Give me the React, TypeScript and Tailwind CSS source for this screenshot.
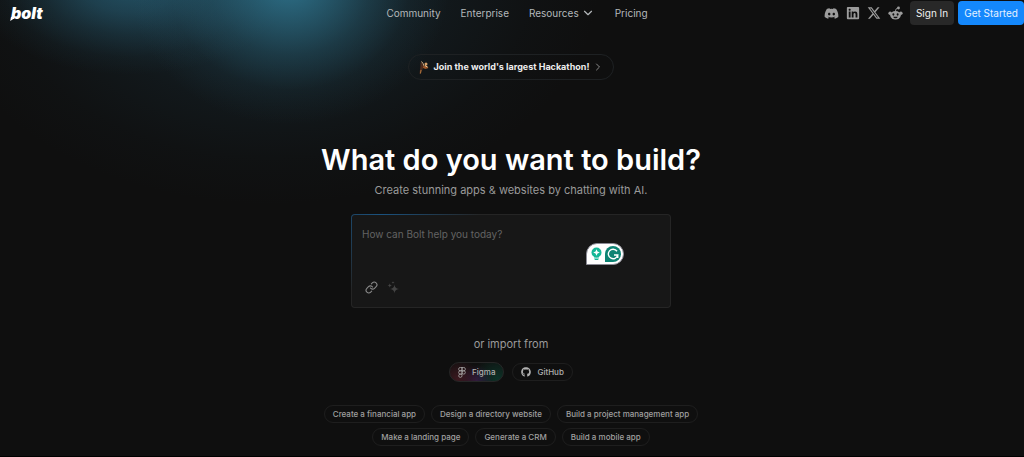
import { ChevronDown, ChevronRight, Link } from "lucide-react";
import { FaDiscord, FaGithub, FaLinkedin } from "react-icons/fa";
import { FaXTwitter } from "react-icons/fa6";

const navLinks = ["Community", "Enterprise", "Resources", "Pricing"];

const socials = [
  { label: "Discord", icon: <FaDiscord size={15} /> },
  { label: "LinkedIn", icon: <FaLinkedin size={14} /> },
  { label: "X", icon: <FaXTwitter size={14} /> },
  { label: "Reddit", icon: <RedditIcon /> },
];

const suggestions = [
  "Create a financial app",
  "Design a directory website",
  "Build a project management app",
  "Make a landing page",
  "Generate a CRM",
  "Build a mobile app",
];

function RedditIcon() {
  return (
    <svg width="15" height="15" viewBox="0 0 30 30" fill="none">
      <ellipse cx="15" cy="18.5" rx="10.5" ry="8.5" fill="currentColor" />
      <circle cx="4.2" cy="14.5" r="3.4" fill="currentColor" />
      <circle cx="25.8" cy="14.5" r="3.4" fill="currentColor" />
      <circle cx="21" cy="4" r="2.8" fill="currentColor" />
      <path d="M15 11c0-4 1.5-6.5 5-7" stroke="currentColor" strokeWidth="2" />
      <ellipse cx="10.8" cy="17" rx="2" ry="2.3" fill="#111" />
      <ellipse cx="19.2" cy="17" rx="2" ry="2.3" fill="#111" />
      <path d="M10.5 21.5h9c-.7 2-2.5 3-4.5 3s-3.8-1-4.5-3z" fill="#111" />
    </svg>
  );
}

function BoltLogo() {
  return (
    <svg width="36" height="20" viewBox="0 0 36 20" fill="#fff">
      <text
        x="1"
        y="16"
        fontFamily="Inter, sans-serif"
        fontSize="16"
        fontWeight="900"
        fontStyle="italic"
      >
        bolt
      </text>
      <path d="M1 14h3l-1.500 2.400L.2 18z" />
    </svg>
  );
}

function RunnerIcon() {
  return (
    <svg width="11" height="13" viewBox="0 0 22 26" fill="none">
      <path d="M3 3l3 1 3 8-2 5-4 8-2 1 1-9 1-6z" fill="#4d2c1e" />
      <path d="M5 1l3 4 2 5" stroke="#d9b48a" strokeWidth="2" />
      <circle cx="14" cy="6" r="3" fill="#d9a066" />
      <path d="M9 9l7 1 3 4-6 2-5-2z" fill="#9c5527" />
      <path d="M12 9l5 3" stroke="#f1d7a8" strokeWidth="2" />
      <path d="M4 18l-1 7" stroke="#b5793f" strokeWidth="2" />
    </svg>
  );
}

function SparklesIcon() {
  return (
    <svg width="13" height="13" viewBox="0 0 26 26" fill="currentColor">
      <path d="M15 7c.8 5.500 2.500 7.700 9 9-6.500 1.300-8.200 3.500-9 9-.8-5.500-2.500-7.700-9-9 6.500-1.300 8.200-3.500 9-9z" />
      <path d="M5.500 4.500c.5 2.800 1.500 4 4.500 4.500-3 .5-4 1.700-4.500 4.500C5 10.700 4 9.500 1 9c3-.5 4-1.700 4.500-4.500z" />
      <path d="M12 0c.3 2 1 2.700 3 3-2 .3-2.700 1-3 3-.3-2-1-2.700-3-3 2-.3 2.700-1 3-3z" />
    </svg>
  );
}

function FigmaIcon() {
  return (
    <svg
      width="8"
      height="11"
      viewBox="0 0 16 22"
      fill="none"
      stroke="currentColor"
      strokeWidth="1.5"
    >
      <path d="M8 1H4.500a3.300 3.300 0 0 0 0 6.600H8zM8 1h3.500a3.300 3.300 0 0 1 0 6.600H8zM8 7.600H4.500a3.300 3.300 0 0 0 0 6.600H8zM8 14.200H4.500A3.300 3.300 0 1 0 8 17.600z" />
      <circle cx="11.4" cy="10.9" r="3.3" />
    </svg>
  );
}

function GrammarlyBadge() {
  return (
    <div className="absolute right-[47px] top-[29px] flex h-[22px] w-[38px] items-center gap-[3px] rounded-[11px] rounded-bl-none border border-[#8b8b95] bg-white pl-[4px]">
      <svg width="11" height="14" viewBox="0 0 22 28">
        <circle cx="11" cy="11" r="10" fill="#15b797" />
        <path d="M6 17h10v4H6zM6 23h10l-2 3H8z" fill="#15b797" />
        <path d="M11 4.500l2 4.500 4.500 2-4.500 2-2 4.500L9 13l-4.500-2L9 9z" fill="#fff" />
      </svg>
      <svg width="16" height="16" viewBox="0 0 32 32">
        <path d="M16 0a16 16 0 1 1 0 32H0V16A16 16 0 0 1 16 0z" fill="#0d8373" />
        <path
          d="M24 10.500A9.500 9.500 0 1 0 25.500 18H18M25.500 17v7"
          fill="none"
          stroke="#fff"
          strokeWidth="2.8"
        />
      </svg>
    </div>
  );
}

function Header() {
  return (
    <header className="grid grid-cols-[1fr_auto_1fr] items-center pl-[10px] pt-px">
      <a href="#" aria-label="bolt" className="justify-self-start">
        <BoltLogo />
      </a>
      <nav className="flex items-center gap-5 text-[10px] text-[#b4b8bb]">
        {navLinks.map((link) => (
          <a key={link} href="#" className="flex items-center gap-[2px]">
            {link}
            {link === "Resources" && <ChevronDown size={14} strokeWidth={2} />}
          </a>
        ))}
      </nav>
      <div className="flex items-center justify-end gap-1">
        <div className="mr-[3px] flex items-center gap-[7px] text-[#9c9c9c]">
          {socials.map((social) => (
            <a key={social.label} href="#" aria-label={social.label}>
              {social.icon}
            </a>
          ))}
        </div>
        <button className="h-6 rounded-[4px] bg-[#282828] px-[6px] text-[10px] text-[#f0f0f0]">
          Sign In
        </button>
        <button className="h-6 rounded-[4px] bg-[#1488fc] px-[6px] text-[10px] text-[#e4f1ff]">
          Get Started
        </button>
      </div>
    </header>
  );
}

function PromptBox() {
  return (
    <div className="relative mt-4 w-[320px] max-w-full rounded-[4px] bg-[radial-gradient(ellipse_100px_80px_at_30px_0px,#1a527f,#252525)] p-px">
      <div className="flex flex-col rounded-[3px] bg-[#171717] px-[10px] pb-[13px] pt-[11px]">
        <textarea
          aria-label="Prompt"
          placeholder="How can Bolt help you today?"
          className="h-[55px] w-full resize-none bg-transparent text-[10px] leading-4 outline-none placeholder:text-[#636363]"
        />
        <div className="flex items-center gap-[9px] px-[3px]">
          <button aria-label="Attach link" className="text-[#8a8a8a]">
            <Link size={13} strokeWidth={2} />
          </button>
          <button aria-label="Enhance prompt" className="text-[#444]">
            <SparklesIcon />
          </button>
        </div>
      </div>
      <GrammarlyBadge />
    </div>
  );
}

export default function App() {
  return (
    <div className="min-h-screen border-b border-black bg-[#0f0f0f] bg-[radial-gradient(ellipse_160px_140px_at_290px_-15px,#2f7690e6,#2f769099_25%,#2f76904d_50%,#2f769014_75%,#2f769000),radial-gradient(ellipse_160px_90px_at_130px_-15px,#2b6a84aa,#2b6a847a_30%,#2b6a8440_55%,#2b6a8412_80%,#2b6a8400),radial-gradient(ellipse_330px_220px_at_270px_-15px,#1f435588,#1f435555_30%,#1f43552b_55%,#1f43550d_80%,#1f435500)] font-['Inter',sans-serif]">
      <Header />

      {/* ===== Hero ===== */}
      <main className="flex flex-col items-center pr-[2px] pt-[29px]">
        <a
          href="#"
          className="flex h-[26px] items-center gap-1 rounded-full border border-[#1e2123] px-[10px] text-[9px] font-bold text-[#ededed]"
        >
          <RunnerIcon />
          Join the world's largest Hackathon!
          <ChevronRight size={12} className="-mx-px text-[#8a8a8a]" />
        </a>

        <h1 className="mt-[60px] text-center text-[29px] font-semibold leading-10 text-white">
          What do you want to build?
        </h1>
        <p className="mt-[2px] text-center text-[11px] leading-4 text-[#9a9a9a]">
          Create stunning apps & websites by chatting with AI.
        </p>

        <PromptBox />

        {/* ===== Import ===== */}
        <p className="mt-7 text-[11px] leading-4 text-[#9a9a9a]">or import from</p>
        <div className="mt-[10px] flex items-center gap-2 text-[8px] font-medium text-[#b0b0b0]">
          <button className="flex h-5 items-center gap-[6px] rounded-full border border-[#262626] bg-[radial-gradient(circle_at_15%_90%,#5a1f2a99,transparent_45%),radial-gradient(circle_at_50%_100%,#43205c99,transparent_50%),radial-gradient(circle_at_90%_90%,#0c4a3899,transparent_50%)] px-2">
            <FigmaIcon />
            Figma
          </button>
          <button className="flex h-[18px] items-center gap-[6px] rounded-full border border-[#1e1e1e] px-2">
            <FaGithub size={10} />
            GitHub
          </button>
        </div>

        {/* ===== Suggestions ===== */}
        <div className="mt-[23px] flex max-w-[400px] flex-wrap justify-center gap-x-[6px] gap-y-[5px] text-[8px] font-medium text-[#a0a0a0]">
          {suggestions.map((text) => (
            <button
              key={text}
              className="h-[18px] rounded-full border border-[#1e1e1e] px-2"
            >
              {text}
            </button>
          ))}
        </div>
      </main>
    </div>
  );
}
